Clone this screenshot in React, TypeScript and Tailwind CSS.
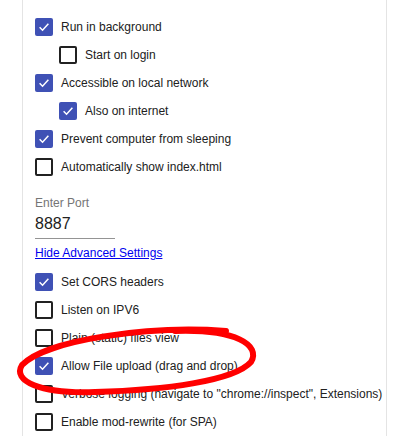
import React from "react";

type Opt = { label: string; checked: boolean; nested?: boolean };

const topOptions: Opt[] = [
  { label: "Run in background", checked: true },
  { label: "Start on login", checked: false, nested: true },
  { label: "Accessible on local network", checked: true },
  { label: "Also on internet", checked: true, nested: true },
  { label: "Prevent computer from sleeping", checked: true },
  { label: "Automatically show index.html", checked: false },
];

const advancedOptions: Opt[] = [
  { label: "Set CORS headers", checked: true },
  { label: "Listen on IPV6", checked: false },
  { label: "Plain (static) files view", checked: false },
  { label: "Allow File upload (drag and drop)", checked: true },
  {
    label: 'Verbose logging (navigate to "chrome://inspect", Extensions)',
    checked: false,
  },
  { label: "Enable mod-rewrite (for SPA)", checked: false },
];

const Box = ({ checked }: { checked: boolean }) =>
  checked ? (
    <span className="flex items-center justify-center w-[18px] h-[18px] rounded-[2px] bg-[#3f51b5] shrink-0">
      <svg width="14" height="14" viewBox="0 0 24 24">
        <path
          d="M4.5 12.5 L9.5 17.5 L19.5 6.5"
          fill="none"
          stroke="#fff"
          strokeWidth="2.6"
        />
      </svg>
    </span>
  ) : (
    <span className="w-[18px] h-[18px] rounded-[2px] border-2 border-[#212121] shrink-0" />
  );

const Row = ({ opt }: { opt: Opt }) => (
  <li
    className={
      "flex items-center gap-2 h-[28px]" + (opt.nested ? " pl-[24px]" : "")
    }
  >
    <Box checked={opt.checked} />
    <span className="text-[12px] text-[#212121] whitespace-nowrap">
      {opt.label}
    </span>
  </li>
);

export default function App() {
  return (
    <div className="w-[400px] h-[436px] overflow-hidden bg-white font-['Liberation_Sans',Arial,sans-serif] relative">
      <div className="ml-[22px] w-[365px] h-full border-x border-x-[#e4e4e4] pl-[12px] overflow-hidden">
        <h2 className="text-[15px] font-bold text-[#212121] leading-[20px] -mt-[18px] mb-[11px] whitespace-nowrap">
          Options (may need restart)
        </h2>
        <ul className="flex flex-col">
          {topOptions.map((o) => (
            <Row key={o.label} opt={o} />
          ))}
        </ul>
        <div className="mt-[14px] flex flex-col">
          <label className="text-[12px] leading-[16px] text-[#757575]">
            Enter Port
          </label>
          <div className="w-[80px] border-b border-b-[#949494] text-[16px] leading-[20px] text-[#212121] pt-[3px] pb-[4px]">
            8887
          </div>
          <a
            href="#"
            className="mt-[6px] text-[12px] leading-[16px] text-[#0000ee] underline w-fit"
          >
            Hide Advanced Settings
          </a>
        </div>
        <ul className="flex flex-col mt-[7px]">
          {advancedOptions.map((o) => (
            <Row key={o.label} opt={o} />
          ))}
        </ul>
      </div>
      <svg
        className="absolute left-0 top-0 pointer-events-none"
        width="400"
        height="436"
        viewBox="0 0 400 436"
      >
        <path
          d="M226 331 C150 325 45 340 22 365 C12 381 40 394 95 392 C165 390 234 381 251 362 C261 345 236 329 175 331"
          fill="none"
          stroke="#ff0000"
          strokeWidth="6"
          strokeLinecap="round"
        />
      </svg>
    </div>
  );
}
